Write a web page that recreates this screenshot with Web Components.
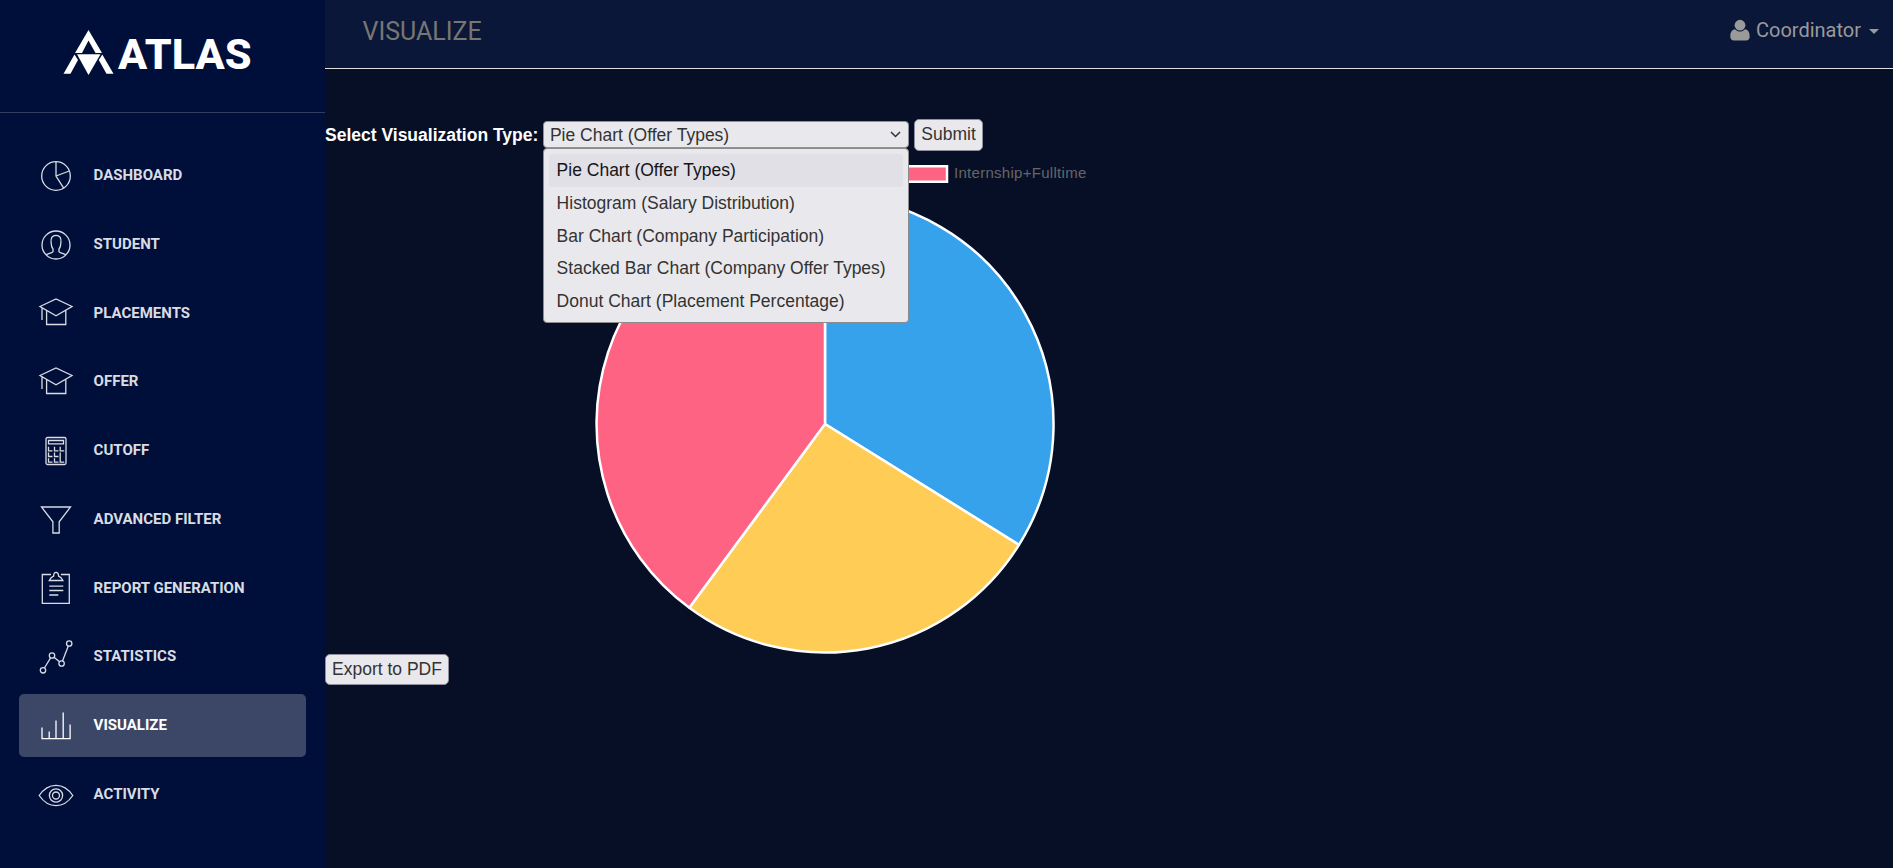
<!DOCTYPE html>
<html lang="en">
<head>
<meta charset="utf-8">
<title>Atlas</title>
<style>
html,body{margin:0;height:100%}
body{font-family:Roboto,sans-serif;background:#070f27;overflow:hidden}
</style>
</head>
<body>
<atlas-app></atlas-app>
<script>
const define = (name, html, setup) => {
  const tpl = document.createElement('template');
  tpl.innerHTML = html;
  customElements.define(name, class extends HTMLElement {
    constructor() {
      super();
      this.attachShadow({mode: 'open'}).append(tpl.content.cloneNode(true));
    }
    connectedCallback() { if (setup) setup(this, this.shadowRoot); }
  });
};

const icons = {
  pie: '<circle cx="18" cy="18" r="14.3"/><path d="M18 3.7V18l7.7 12.2M18 18l13.2-5"/>',
  user: '<circle cx="18" cy="18" r="14"/><path d="M8.3 27.6c2.500-1.300 6.700-1.700 6.700-3.200v-2.400c-1.600-1.700-1.800-3.500-1.900-6.500-.5-4.600 1.200-7.200 4.900-7.200s5.400 2.600 4.900 7.200c-.1 3-.3 4.800-1.900 6.500v2.400c0 1.500 4.200 1.900 6.700 3.200"/>',
  cap: '<path d="M2 11.500 18 4l16 7.500-16 9.200zM8.600 15.500v14h19.200v-14M4 12.500v12.500"/>',
  calc: '<rect x="8" y="4.500" width="20" height="27" rx="1.500"/><path d="M10.500 7.500h15v3.300h-15zM10.500 13.800v4h4M16.500 13.800v4h4M22.200 13.800v4h4M10.500 19.500v4h4M16.500 19.500v4h4M10.500 25.200v4h4M16.500 25.200v4h4M22.200 19.500v9.700h4"/>',
  filter: '<path d="M3.500 5h29L21.200 19.800V31h-6.300V19.800z"/>',
  report: '<path d="M13 4.500H4.300v28.800h27V4.500h-8.400M11.300 10.500h13.600c-1.200-2.600-2.600-3.600-4.300-4.300 0-5.200-5-5.200-5 0-1.700.7-3.100 1.700-4.300 4.300zM11.300 16.200h14M11.300 20.500h14M11.300 25h9"/>',
  stats: '<circle cx="5" cy="31.300" r="2.700"/><circle cx="14" cy="16.500" r="2.700"/><circle cx="23.600" cy="24.500" r="2.700"/><circle cx="31.200" cy="4.500" r="2.700"/><path d="M6.400 29 12.600 18.800M16 18.200l5.500 4.600M24.500 22 30.300 7"/>',
  bars: '<path d="M4 19.500v11.200h28.100V16.500M11.200 23.500v7M18 12.500v18M25.200 4.500v26"/>',
  eye: '<path d="M1.200 18.500C10.500 5 25.500 5 34.800 18.500 25.500 32 10.500 32 1.200 18.500z"/><circle cx="18" cy="18.500" r="6.600"/><circle cx="18" cy="18.500" r="3.500"/>'
};

define('atlas-logo', `
<style>:host{display:block;height:112px;border-bottom:1px solid #333d62}svg{display:block}</style>
<svg width="325" height="112" fill="#fff">
<path d="M88.500 30 102 53H95.500L88.500 40.500 82 53H75z"/>
<path d="M77 54.200H100.500L88.500 75z"/>
<path d="M74.500 54.500 78 60 70.500 73.800H63.500zM102.300 54.500 98.800 60 106.500 73.800H113.500z"/>
<text x="118" y="69.300" font-family="Roboto" font-weight="800" font-size="42.500" textLength="133.500" lengthAdjust="spacingAndGlyphs">ATLAS</text>
</svg>`);

define('nav-item', `
<style>
:host{display:flex;align-items:center;box-sizing:border-box;height:62.750px;margin:0 19px 6px;padding-left:19px;border-radius:5px;color:#d9dce3;font:700 15px/37.500px Roboto,sans-serif}
:host([active]){background:#3c4768;color:#fff}
svg{display:block;flex:none;width:36px;height:36px;margin-right:19.600px;overflow:visible;fill:none;stroke:currentColor;stroke-width:1.300}
</style><svg viewBox="0 0 36 36"></svg><slot></slot>`,
(el, root) => { root.querySelector('svg').innerHTML = icons[el.getAttribute('icon')]; });

define('side-bar', `
<style>:host{display:block;width:325px;height:100%;background:#000f3a;flex:none}nav{padding-top:31.400px}</style>
<atlas-logo></atlas-logo>
<nav>
<nav-item icon="pie">DASHBOARD</nav-item>
<nav-item icon="user">STUDENT</nav-item>
<nav-item icon="cap">PLACEMENTS</nav-item>
<nav-item icon="cap">OFFER</nav-item>
<nav-item icon="calc">CUTOFF</nav-item>
<nav-item icon="filter">ADVANCED FILTER</nav-item>
<nav-item icon="report">REPORT GENERATION</nav-item>
<nav-item icon="stats">STATISTICS</nav-item>
<nav-item icon="bars" active>VISUALIZE</nav-item>
<nav-item icon="eye">ACTIVITY</nav-item>
</nav>`);

define('top-bar', `
<style>
:host{display:flex;justify-content:space-between;box-sizing:border-box;height:69px;border-bottom:1px solid #ddd;background:#0a1738;padding:0 14px 0 37.500px}
.t{font:400 25px/64px Roboto,sans-serif;color:#777672}
.u{display:flex;align-items:center;height:60px;font:400 20px/60px Roboto,sans-serif;color:#9a9a9a}
.u svg{fill:currentColor;display:block}
.p{margin-right:6px}.c{margin:3px 0 0 8px}
</style>
<div class="t">VISUALIZE</div>
<div class="u"><svg class="p" width="20" height="22"><circle cx="10" cy="6.200" r="5.400"/><path d="M5 10.200c3 3.200 7 3.200 10 0 3.300.5 4.700 3.300 4.700 7.300 0 2.600-1.500 3.900-3.700 3.900H4c-2.200 0-3.700-1.300-3.700-3.900 0-4 1.400-6.800 4.700-7.300z"/></svg><span>Coordinator</span><svg class="c" width="10" height="5"><path d="M0 0h10L5 5z"/></svg></div>`);

define('push-button', `
<style>:host{display:block;box-sizing:border-box;height:31.500px;padding:0 6px;border:1px solid #8f8f9d;border-radius:5px;background:#e9e9ed;color:#333;font:17.500px/29.500px "Liberation Sans",Arial,sans-serif;white-space:nowrap}</style><slot></slot>`);

define('option-row', `
<style>:host{display:block;height:32.700px;padding-left:7.300px;border-radius:3px;color:#333;font:17.500px/32.700px "Liberation Sans",Arial,sans-serif;white-space:nowrap}:host([selected]){background:#e0e0e6;color:#15141a}</style><slot></slot>`);

define('select-box', `
<style>
:host{display:block;position:relative;width:365.500px;color:#333;font:17.500px/26px "Liberation Sans",Arial,sans-serif}
.b{display:flex;justify-content:space-between;align-items:center;box-sizing:border-box;height:27px;border:1px solid #8f8f9d;border-radius:4px;background:#e9e9ed;padding:0 7px 0 5.600px}
.b span{padding-top:1px}
.m{position:absolute;left:0;top:27px;z-index:2;box-sizing:border-box;width:100%;height:175px;padding:5px;border:1px solid #8c8c8c;border-radius:4px;background:#e9e9ed}
</style>
<div class="b"><span>Pie Chart (Offer Types)</span><svg width="11" height="7" fill="none" stroke="#333" stroke-width="1.500"><path d="M1 1l4.500 4.500L10 1"/></svg></div>
<div class="m"><slot></slot></div>`);

define('pie-chart', `
<style>:host{display:block;height:501px}svg{display:block;overflow:visible}</style>
<svg width="1000" height="500">
<rect x="574" y="13.250" width="48" height="15.500" fill="#ff6384" stroke="#fff" stroke-width="2.500"/>
<text x="629" y="25" font-family="Liberation Sans" font-size="15" textLength="132.300" fill="#666">Internship+Fulltime</text>
<g stroke="#fff" stroke-width="2.500" stroke-linejoin="bevel">
<path fill="#36a2eb" d="M500 271V42.500A228.500 228.500 0 0 1 694 391.800z"/>
<path fill="#ffcd56" d="M500 271 694 391.800A228.500 228.500 0 0 1 364.300 454.800z"/>
<path fill="#ff6384" d="M500 271 364.300 454.800A228.500 228.500 0 0 1 500 42.500z"/>
</g></svg>`);

define('visualize-view', `
<style>
:host{display:block;padding-top:50px;color:#fff}
.f{display:flex;align-items:center;height:31.500px;font:700 17.500px/31px "Liberation Sans",Arial,sans-serif}
.f>span{padding-top:1.500px}
select-box{margin:0 5.500px 0 5px}
pie-chart{margin-top:2px}
.e{display:flex}
</style>
<div class="f"><span>Select Visualization Type:</span>
<select-box><option-row selected>Pie Chart (Offer Types)</option-row><option-row>Histogram (Salary Distribution)</option-row><option-row>Bar Chart (Company Participation)</option-row><option-row>Stacked Bar Chart (Company Offer Types)</option-row><option-row>Donut Chart (Placement Percentage)</option-row></select-box>
<push-button>Submit</push-button></div>
<pie-chart></pie-chart>
<div class="e"><push-button>Export to PDF</push-button></div>`);

define('atlas-app', `
<style>:host{display:flex;height:868px;width:1893px}main{flex:1;min-width:0}</style>
<side-bar></side-bar>
<main><top-bar></top-bar><visualize-view></visualize-view></main>`);
</script>
</body>
</html>
